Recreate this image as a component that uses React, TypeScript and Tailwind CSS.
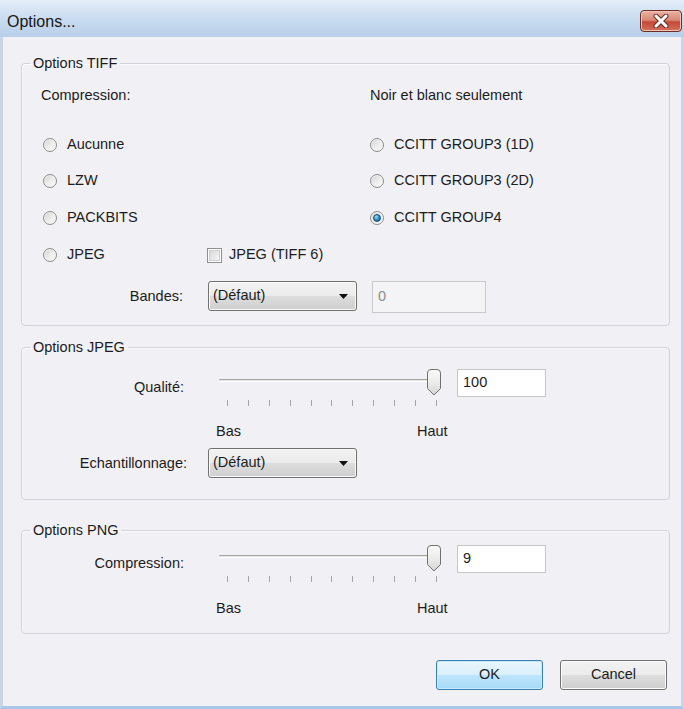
import React from "react";

function Radio({ checked = false }: { checked?: boolean }) {
  return (
    <span className="flex h-[14px] w-[14px] shrink-0 items-center justify-center rounded-full border border-[#8c8c8c] bg-gradient-to-br from-[#cfcfcf] via-[#ececec] to-[#fdfdfd] shadow-[inset_0_0_0_1px_#f4f4f4]">
      {checked && (
        <span className="h-[8px] w-[8px] rounded-full border border-[#124c72] bg-[radial-gradient(circle_at_35%_30%,#9fdcfa,#2a8ac4_55%,#0d4d78)]" />
      )}
    </span>
  );
}

function Checkbox() {
  return (
    <span className="flex h-[15px] w-[15px] shrink-0 items-center justify-center border border-[#8e8f8f] bg-white">
      <span className="h-[11px] w-[11px] border border-[#cfcfcf] bg-gradient-to-br from-[#d8d8d8] to-[#f6f6f6]" />
    </span>
  );
}

function Select({ w }: { w: string }) {
  return (
    <div
      className={`${w} flex h-[30px] items-center justify-between rounded-[3px] border border-[#707070] bg-[linear-gradient(to_bottom,#f3f3f3_0%,#ebebeb_50%,#dddddd_51%,#cfcfcf_100%)] pl-[4px] pr-[8px] shadow-[inset_0_0_0_1px_#fafafa]`}
    >
      <span>(Défaut)</span>
      <svg width="9" height="5" viewBox="0 0 9 5">
        <path d="M0 0 H9 L4.5 5 Z" fill="#111" />
      </svg>
    </div>
  );
}

function Thumb() {
  return (
    <svg width="16" height="27" viewBox="0 0 16 27" className="absolute left-[207px] top-0">
      <defs>
        <linearGradient id="th" x1="0" y1="0" x2="0" y2="1">
          <stop offset="0" stopColor="#fbfbfb" />
          <stop offset="0.5" stopColor="#ececec" />
          <stop offset="1" stopColor="#d6d6d6" />
        </linearGradient>
      </defs>
      <path
        d="M1.5 4 Q1.5 0.5 5 0.5 H11 Q14.5 0.5 14.5 4 V19.5 L8 26 L1.5 19.5 Z"
        fill="url(#th)"
        stroke="#707070"
      />
    </svg>
  );
}

function Slider() {
  return (
    <div className="flex w-[238px] flex-col">
      <div className="relative h-[26px]">
        <div className="mt-[10px] h-[3px] w-[220px] rounded-[1px] border-t border-[#a3a3a3] border-b border-b-[#ffffff] bg-[#e6e6e6]" />
        <Thumb />
      </div>
      <div className="ml-[8px] mt-[5px] flex h-[7px] w-[210px] justify-between">
        {Array.from({ length: 11 }).map((_, i) => (
          <span key={i} className="h-[6px] w-px bg-[#a5a5a5]" />
        ))}
      </div>
    </div>
  );
}

function Group({ title, children, className }: { title: string; children: React.ReactNode; className: string }) {
  return (
    <fieldset className={`${className} ml-[18px] w-[649px] rounded-[4px] border border-[#d2d2da] p-0 shadow-[inset_1px_1px_0_#fbfbfd]`}>
      <legend className="ml-[8px] px-[3px] leading-[16px]">{title}</legend>
      {children}
    </fieldset>
  );
}

function Button({ label, primary = false }: { label: string; primary?: boolean }) {
  return (
    <div
      className={
        primary
          ? "flex h-[30px] w-[107px] items-center justify-center rounded-[3px] border border-[#3c7fb1] bg-[linear-gradient(to_bottom,#eaf6fd_0%,#d9f0fc_50%,#bee6fd_51%,#a7d9f5_100%)] shadow-[inset_0_0_0_1px_#c6eaff]"
          : "flex h-[30px] w-[107px] items-center justify-center rounded-[3px] border border-[#707070] bg-[linear-gradient(to_bottom,#f2f2f2_0%,#ebebeb_50%,#dddddd_51%,#cfcfcf_100%)] shadow-[inset_0_0_0_1px_#fbfbfb]"
      }
    >
      {label}
    </div>
  );
}

export default function App() {
  return (
    <div className="flex h-[709px] w-[684px] flex-col bg-[#c3d5ea] font-['Liberation_Sans',Arial,sans-serif] text-[14.5px] text-[#1c1c1c]">
      {/* title bar */}
      <div className="flex h-[37px] shrink-0 items-start justify-between bg-gradient-to-b from-[#e4edf8] via-[#cadcf0] to-[#b8cfe9] pl-[7px] pr-[2px]">
        <span className="mt-[12px] text-[16px] leading-[19px] text-[#151515]">Options...</span>
        <div className="mt-[10px] flex h-[22px] w-[42px] items-center justify-center rounded-[4px] border border-[#6b2d24] bg-[linear-gradient(to_bottom,#eab1a3_0%,#d98a78_45%,#c5483a_55%,#d2705c_100%)] shadow-[inset_0_0_0_1px_#f1c4b8]">
          <svg width="16" height="14" viewBox="0 0 16 14">
            <path d="M3 2 L13 12 M13 2 L3 12" stroke="#6a2a22" strokeWidth="5" strokeLinecap="round" />
            <path d="M3 2 L13 12 M13 2 L3 12" stroke="#ffffff" strokeWidth="3" strokeLinecap="round" />
          </svg>
        </div>
      </div>

      {/* body */}
      <div className="flex flex-1 flex-col border-x-[3px] border-b-[3px] border-x-[#c7d5e5] border-b-[#a9c7e6] bg-[#f1f0f4]">
        <Group title="Options TIFF" className="mt-[18px]">
          <div className="flex flex-col pb-[12px]">
            <div className="flex h-[50px] items-center pl-[19px]">
              <span className="w-[329px]">Compression:</span>
              <span>Noir et blanc seulement</span>
            </div>
            <div className="mt-[6px] flex flex-col pl-[21px]">
              <div className="flex h-[36px] items-center">
                <label className="flex w-[327px] items-center gap-[10px]">
                  <Radio />
                  Aucunne
                </label>
                <label className="flex items-center gap-[10px]">
                  <Radio />
                  CCITT GROUP3 (1D)
                </label>
              </div>
              <div className="flex h-[36px] items-center">
                <label className="flex w-[327px] items-center gap-[10px]">
                  <Radio />
                  LZW
                </label>
                <label className="flex items-center gap-[10px]">
                  <Radio />
                  CCITT GROUP3 (2D)
                </label>
              </div>
              <div className="flex h-[37px] items-center">
                <label className="flex w-[327px] items-center gap-[10px]">
                  <Radio />
                  PACKBITS
                </label>
                <label className="flex items-center gap-[10px]">
                  <Radio checked />
                  CCITT GROUP4
                </label>
              </div>
              <div className="flex h-[38px] items-center">
                <label className="flex w-[164px] items-center gap-[10px]">
                  <Radio />
                  JPEG
                </label>
                <label className="flex items-center gap-[7px]">
                  <Checkbox />
                  JPEG (TIFF 6)
                </label>
              </div>
              <div className="flex items-start pt-[7px]">
                <span className="w-[140px] text-right leading-[30px]">Bandes:</span>
                <div className="ml-[25px]">
                  <Select w="w-[149px]" />
                </div>
                <div className="ml-[15px] flex h-[32px] w-[114px] items-center border border-[#c9c9cc] bg-[#f4f3f6] pl-[5px] text-[#8d8d8d]">
                  0
                </div>
              </div>
            </div>
          </div>
        </Group>

        <Group title="Options JPEG" className="mt-[13px]">
          <div className="flex flex-col pb-[20px] pl-[21px]">
            <div className="mt-[14px] flex items-start">
              <span className="mt-[10px] w-[141px] text-right leading-[17px]">Qualité:</span>
              <div className="ml-[35px]">
                <Slider />
              </div>
              <div className="flex h-[28px] w-[89px] items-center border border-[#c6c6ca] bg-white pl-[5px]">100</div>
            </div>
            <div className="mt-[16px] flex pl-[173px] leading-[17px]">
              <span className="w-[201px]">Bas</span>
              <span>Haut</span>
            </div>
            <div className="mt-[8px] flex items-start">
              <span className="w-[144px] text-right leading-[31px]">Echantillonnage:</span>
              <div className="ml-[21px]">
                <Select w="w-[149px]" />
              </div>
            </div>
          </div>
        </Group>

        <Group title="Options PNG" className="mt-[22px]">
          <div className="flex flex-col pb-[16px] pl-[21px]">
            <div className="mt-[7px] flex items-start">
              <span className="mt-[10px] w-[141px] text-right leading-[17px]">Compression:</span>
              <div className="ml-[35px]">
                <Slider />
              </div>
              <div className="flex h-[28px] w-[89px] items-center border border-[#c6c6ca] bg-white pl-[5px]">9</div>
            </div>
            <div className="mt-[17px] flex pl-[173px] leading-[17px]">
              <span className="w-[201px]">Bas</span>
              <span>Haut</span>
            </div>
          </div>
        </Group>

        <div className="mt-[26px] flex justify-end gap-[17px] pr-[14px]">
          <Button label="OK" primary />
          <Button label="Cancel" />
        </div>
      </div>
    </div>
  );
}
